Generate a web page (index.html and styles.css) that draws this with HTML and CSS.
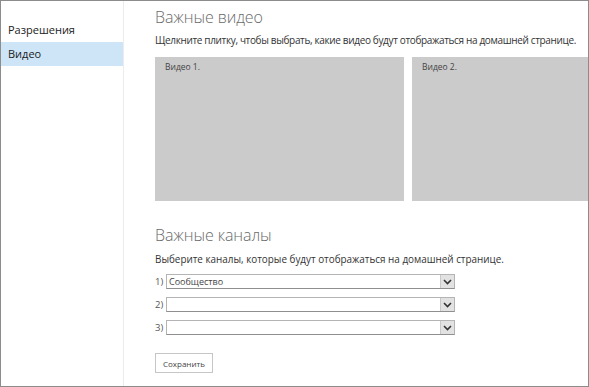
FILE: index.html
```
<!DOCTYPE html>
<html lang="ru">
<head>
  <meta charset="UTF-8" />
  <title>Параметры — Видео</title>
  <link rel="stylesheet" href="styles.css">
</head>
<body>
  <div class="frame">
    <div class="sidebar">
      <div class="nav-item">Разрешения</div>
      <div class="nav-item active">Видео</div>
    </div>

    <div class="main">
      <h2>Важные видео</h2>
      <p class="hint">Щелкните плитку, чтобы выбрать, какие видео будут отображаться на домашней странице.</p>

      <div class="tiles">
        <div class="tile">Видео 1.</div>
        <div class="tile">Видео 2.</div>
      </div>

      <h2 class="second">Важные каналы</h2>
      <p class="hint small">Выберите каналы, которые будут отображаться на домашней странице.</p>

      <div class="channels">
        <div class="channel">
          <span class="num">1)</span>
          <div class="select">
            <span class="value">Сообщество</span>
            <span class="arrow"><svg width="9" height="6" viewBox="0 0 9 6"><path d="M1 1 L4.5 4.5 L8 1" fill="none" stroke="#333" stroke-width="1.6"/></svg></span>
          </div>
        </div>
        <div class="channel">
          <span class="num">2)</span>
          <div class="select">
            <span class="value"></span>
            <span class="arrow"><svg width="9" height="6" viewBox="0 0 9 6"><path d="M1 1 L4.5 4.5 L8 1" fill="none" stroke="#333" stroke-width="1.6"/></svg></span>
          </div>
        </div>
        <div class="channel">
          <span class="num">3)</span>
          <div class="select">
            <span class="value"></span>
            <span class="arrow"><svg width="9" height="6" viewBox="0 0 9 6"><path d="M1 1 L4.5 4.5 L8 1" fill="none" stroke="#333" stroke-width="1.6"/></svg></span>
          </div>
        </div>
      </div>

      <button class="save">Сохранить</button>
    </div>
  </div>
</body>
</html>
```

FILE: styles.css
```
body {
  margin: 0;
  font-family: 'Open Sans', 'Noto Sans', sans-serif;
  color: #333;
}

.frame {
  width: 589px;
  height: 387px;
  box-sizing: border-box;
  border: 1px solid #8c8c8c;
  display: flex;
  overflow: hidden;
  background: #fff;
}

.sidebar {
  width: 122px;
  flex-shrink: 0;
  border-right: 1px solid #ececec;
  padding-top: 17px;
}

.nav-item {
  height: 24px;
  line-height: 24px;
  padding-left: 7px;
  font-size: 11px;
  color: #222;
}

.nav-item.active {
  background: #cde5f7;
}

.main {
  flex: 1;
  padding-left: 31px;
  min-width: 0;
}

h2 {
  margin: 5px 0 0;
  font-size: 16px;
  font-weight: 300;
  color: #6a6a6a;
  line-height: 22px;
  letter-spacing: -0.1px;
}

h2.second {
  margin-top: 23px;
}

.hint {
  margin: 5px 0 0;
  font-size: 10px;
  letter-spacing: -0.35px;
  line-height: 14px;
  color: #333;
  white-space: nowrap;
}

.hint.small {
  margin-top: 6px;
  font-size: 9.9px;
  letter-spacing: 0;
}

.tiles {
  display: flex;
  gap: 8px;
  margin-top: 10px;
}

.tile {
  width: 249px;
  height: 144px;
  flex-shrink: 0;
  background: #cbcbcb;
  box-sizing: border-box;
  padding: 4px 10px;
  font-size: 8.5px;
  color: #444;
}

.channels {
  margin-top: 8px;
  display: flex;
  flex-direction: column;
  gap: 8px;
}

.channel {
  display: flex;
  align-items: center;
}

.num {
  width: 11px;
  font-size: 9.5px;
  color: #555;
}

.select {
  width: 289px;
  height: 15px;
  box-sizing: border-box;
  border: 1px solid #b4b4b4;
  border-bottom-color: #8f8f8f;
  display: flex;
  align-items: center;
}

.value {
  flex: 1;
  font-size: 9px;
  color: #444;
  padding-left: 2px;
}

.arrow {
  width: 13px;
  height: 13px;
  background: #e2e2e2;
  border-left: 1px solid #c8c8c8;
  display: flex;
  align-items: center;
  justify-content: center;
}

.save {
  margin-top: 18px;
  width: 58px;
  height: 20px;
  background: #fff;
  border: 1px solid #c6c6c6;
  font-family: 'Open Sans', 'Noto Sans', sans-serif;
  font-size: 8px;
  color: #444;
  padding: 0;
}
```
